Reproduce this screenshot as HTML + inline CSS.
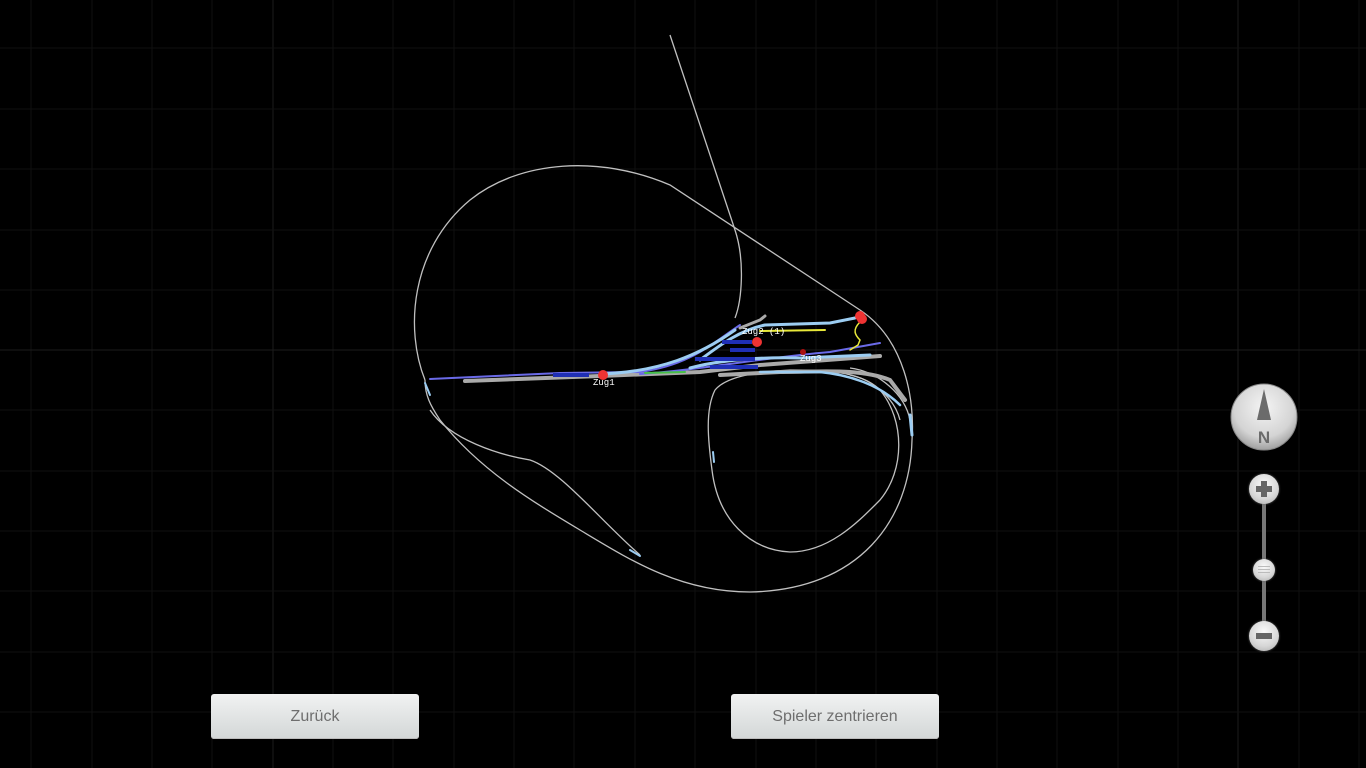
<!DOCTYPE html>
<html><head><meta charset="utf-8"><style>
html,body{margin:0;padding:0;background:#000;width:1366px;height:768px;overflow:hidden;font-family:"Liberation Sans",sans-serif}
svg{position:absolute;left:0;top:0}
.btn{position:absolute;top:694px;width:208px;height:45px;border-radius:3px;background:linear-gradient(#f1f2f2,#d3d7d7);color:#6e6e6e;font-size:16px;text-align:center;line-height:46px;box-shadow:inset 0 -1px 0 #bbb}
.zb{position:absolute;border-radius:50%;background:radial-gradient(circle at 50% 35%,#fafafa,#d6d6d6 60%,#a8a8a8);box-shadow:0 0 2px #666}
</style></head><body>
<svg width="1366" height="768" viewBox="0 0 1366 768">
<g stroke="#101010" stroke-width="1" shape-rendering="crispEdges">
<line x1="31" y1="0" x2="31" y2="768"/><line x1="92" y1="0" x2="92" y2="768"/><line x1="152" y1="0" x2="152" y2="768"/><line x1="212" y1="0" x2="212" y2="768"/><line x1="273" y1="0" x2="273" y2="768" stroke="#1c1c1c"/><line x1="333" y1="0" x2="333" y2="768"/><line x1="393" y1="0" x2="393" y2="768"/><line x1="454" y1="0" x2="454" y2="768"/><line x1="514" y1="0" x2="514" y2="768"/><line x1="574" y1="0" x2="574" y2="768"/><line x1="635" y1="0" x2="635" y2="768"/><line x1="695" y1="0" x2="695" y2="768"/><line x1="756" y1="0" x2="756" y2="768"/><line x1="816" y1="0" x2="816" y2="768"/><line x1="876" y1="0" x2="876" y2="768"/><line x1="937" y1="0" x2="937" y2="768"/><line x1="997" y1="0" x2="997" y2="768"/><line x1="1057" y1="0" x2="1057" y2="768"/><line x1="1118" y1="0" x2="1118" y2="768"/><line x1="1178" y1="0" x2="1178" y2="768"/><line x1="1238" y1="0" x2="1238" y2="768" stroke="#1c1c1c"/><line x1="1299" y1="0" x2="1299" y2="768"/><line x1="1359" y1="0" x2="1359" y2="768"/>
<line x1="0" y1="48" x2="1366" y2="48"/><line x1="0" y1="109" x2="1366" y2="109"/><line x1="0" y1="169" x2="1366" y2="169"/><line x1="0" y1="230" x2="1366" y2="230"/><line x1="0" y1="290" x2="1366" y2="290"/><line x1="0" y1="350" x2="1366" y2="350" stroke="#1c1c1c"/><line x1="0" y1="410" x2="1366" y2="410"/><line x1="0" y1="471" x2="1366" y2="471"/><line x1="0" y1="531" x2="1366" y2="531"/><line x1="0" y1="591" x2="1366" y2="591"/><line x1="0" y1="652" x2="1366" y2="652"/><line x1="0" y1="712" x2="1366" y2="712"/>
</g>
<g fill="none" stroke="#c0c0c0" stroke-width="1.3">
<path d="M425,380 C405,330 410,250 470,200 C520,160 600,155 670,185 L860,310 C905,340 915,400 912,440 C910,520 860,590 750,592 C680,592 630,560 580,530 C530,500 480,470 440,420 C430,405 425,395 425,380"/>
<path d="M670,35 L735,230 C745,260 742,300 735,318"/>
<path d="M715,390 C705,410 708,440 712,470 C718,520 750,550 790,552 C830,552 860,520 880,500 C905,470 905,420 880,390 C860,370 820,370 790,370 C750,372 725,378 715,390"/>
<path d="M430,410 C450,440 500,455 530,460 C560,470 600,520 640,555"/>
<path d="M850,368 C880,372 905,395 910,420"/>
<path d="M850,375 C875,380 895,400 900,420"/>
</g>
<g stroke-linecap="round" fill="none">
<path d="M465,381 L600,376 L700,372 L760,365 L880,356" stroke="#aaa" stroke-width="4"/>
<path d="M430,379 L560,373 L640,372 C690,365 710,345 740,325" stroke="#6a6ae8" stroke-width="2"/>
<path d="M600,374 C660,372 700,355 735,330" stroke="#9ccdf2" stroke-width="3"/>
<path d="M640,374 C700,370 760,358 830,352 L880,343" stroke="#6a6ae8" stroke-width="2"/>
<path d="M700,360 C720,345 740,330 765,325 L830,323 L855,318" stroke="#9ccdf2" stroke-width="3"/>
<path d="M690,368 C720,360 760,357 800,358 L870,355" stroke="#9ccdf2" stroke-width="3"/>
<path d="M720,375 L780,372 C820,372 860,368 890,380 L905,400" stroke="#aaa" stroke-width="4"/>
<path d="M760,372 L820,372 C850,375 880,385 900,405" stroke="#9ccdf2" stroke-width="2.5"/>
<path d="M740,328 L760,320 L765,316" stroke="#aaa" stroke-width="3"/>
<path d="M760,331 L825,330" stroke="#e8e83a" stroke-width="2"/>
<path d="M645,373 L685,372" stroke="#46c046" stroke-width="2"/>
<path d="M425,383 L430,395" stroke="#9ccdf2" stroke-width="2"/>
<path d="M630,550 L640,556" stroke="#9ccdf2" stroke-width="2"/>
<path d="M713,452 L714,462" stroke="#9ccdf2" stroke-width="2"/>
<path d="M910,415 L912,435" stroke="#9ccdf2" stroke-width="3"/>
<path d="M860,322 C852,330 855,335 860,340 L858,345 L850,350" stroke="#e8e83a" stroke-width="1.5"/>
</g>
<g fill="#1f2fb5">
<rect x="553" y="373" width="36" height="4"/>
<rect x="695" y="357" width="60" height="4"/><rect x="710" y="365" width="48" height="4"/>
<rect x="722" y="340" width="30" height="4"/><rect x="730" y="348" width="25" height="4"/>
</g>
<g fill="#ee3333"><circle cx="603" cy="375" r="5"/><circle cx="757" cy="342" r="5"/><circle cx="860" cy="316" r="5"/><circle cx="862" cy="319" r="5"/><circle cx="803" cy="352" r="3" fill="#aa1111"/></g>
<g fill="#fff" font-family="Liberation Mono,monospace" font-size="9">
<text x="593" y="385">Zug1</text><text x="742" y="334">Zug2 (1)</text><text x="800" y="361">Zug3</text>
</g>
<defs><radialGradient id="cg" cx="50%" cy="35%" r="65%"><stop offset="0" stop-color="#f4f4f4"/><stop offset="0.7" stop-color="#d4d4d4"/><stop offset="1" stop-color="#a0a0a0"/></radialGradient></defs>
<circle cx="1264" cy="417" r="33" fill="url(#cg)" stroke="#888" stroke-width="1"/>
<path d="M1264,389 L1257,420 L1271,420 Z" fill="#6b6b6b"/>
<text x="1264" y="443" text-anchor="middle" font-family="Liberation Sans,sans-serif" font-weight="bold" font-size="17" fill="#6b6b6b">N</text>
<rect x="1262" y="492" width="4" height="144" fill="#777"/>
</svg>
<div class="zb" style="left:1249px;top:474px;width:30px;height:30px"></div>
<div style="position:absolute;left:1256px;top:486px;width:16px;height:6px;background:#666"></div>
<div style="position:absolute;left:1261px;top:481px;width:6px;height:16px;background:#666"></div>
<div class="zb" style="left:1253px;top:559px;width:22px;height:22px"></div>
<div style="position:absolute;left:1258px;top:566px;width:12px;height:1px;background:#bbb;box-shadow:0 3px 0 #bbb,0 6px 0 #bbb"></div>
<div class="zb" style="left:1249px;top:621px;width:30px;height:30px"></div>
<div style="position:absolute;left:1256px;top:633px;width:16px;height:6px;background:#666"></div>
<div class="btn" style="left:211px">Zurück</div>
<div class="btn" style="left:731px">Spieler zentrieren</div>
</body></html>
